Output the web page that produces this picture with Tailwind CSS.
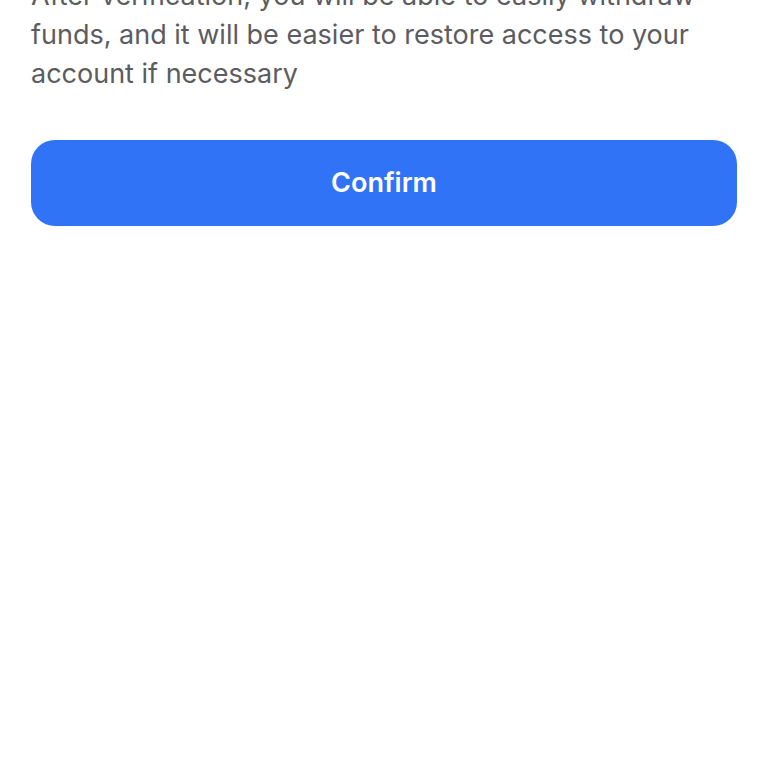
<!DOCTYPE html>
<html lang="en">
<head>
    <meta charset="UTF-8">
    <meta name="viewport" content="width=device-width, initial-scale=1.0">
    <title>Verification</title>
    <script src="https://cdn.jsdelivr.net/npm/@tailwindcss/browser@4"></script>
</head>
<body class="bg-white font-['Inter',sans-serif]">
    <!-- Verification notice -->
    <main class="-mt-6 px-[31px]">
        <p class="text-[27px] leading-[39px] text-[#5b5c60]">
            After verification, you will be able to easily withdraw funds, and it will be easier to restore access to your account if necessary
        </p>
        <button type="button" class="mt-[47px] h-[86px] w-full rounded-3xl bg-[#3173f6] text-[27px] font-semibold text-white">
            Confirm
        </button>
    </main>
</body>
</html>
